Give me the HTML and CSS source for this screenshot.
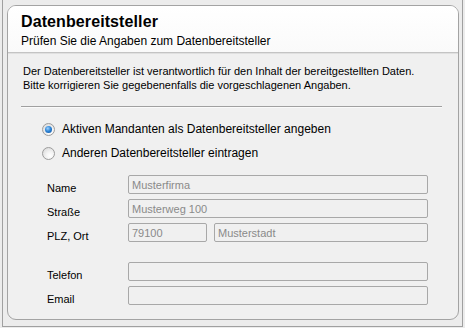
FILE: index.html
```html
<!DOCTYPE html>
<html lang="de">
<head>
<meta charset="utf-8">
<title>Datenbereitsteller</title>
<link rel="stylesheet" href="styles.css">
</head>
<body>
<div class="frame">
  <div class="panel">
    <div class="header">
      <div class="title">Datenbereitsteller</div>
      <div class="subtitle">Prüfen Sie die Angaben zum Datenbereitsteller</div>
    </div>
    <div class="content">
      <p class="intro">Der Datenbereitsteller ist verantwortlich für den Inhalt der bereitgestellten Daten.<br>Bitte korrigieren Sie gegebenenfalls die vorgeschlagenen Angaben.</p>
      <div class="sep"></div>
      <div class="radios">
        <label class="radio"><span class="dot checked"></span>Aktiven Mandanten als Datenbereitsteller angeben</label>
        <label class="radio"><span class="dot"></span>Anderen Datenbereitsteller eintragen</label>
      </div>
      <div class="form">
        <div class="lbl">Name</div>
        <div class="field">Musterfirma</div>
        <div class="lbl">Straße</div>
        <div class="field">Musterweg 100</div>
        <div class="lbl">PLZ, Ort</div>
        <div class="split">
          <div class="field plz">79100</div>
          <div class="field ort">Musterstadt</div>
        </div>
        <div class="lbl gap">Telefon</div>
        <div class="field gap"></div>
        <div class="lbl">Email</div>
        <div class="field"></div>
      </div>
    </div>
  </div>
</div>
</body>
</html>
```

FILE: styles.css
```css
html, body {
  margin: 0;
  padding: 0;
  background: #ececec;
}
body {
  width: 465px;
  height: 328px;
  padding: 0 2px 1px 2px;
  box-sizing: border-box;
  font-family: "Liberation Sans", Arial, sans-serif;
  font-size: 11px;
  color: #000;
}
.frame {
  height: 100%;
  box-sizing: border-box;
  border: 1px solid #a0a0a0;
  border-top: none;
  padding: 5px 3px 6px 4px;
  background: #ececec;
}
.panel {
  height: 315px;
  box-sizing: border-box;
  border: 1px solid #a3a3a3;
  border-radius: 9px;
  background: #f0f0f0;
  overflow: hidden;
  display: flex;
  flex-direction: column;
}
.header {
  height: 47px;
  box-sizing: border-box;
  background: linear-gradient(#ffffff, #fafafa);
  border-bottom: 1px solid #c4c4c4;
  box-shadow: 0 1px 0 #e0e0e0;
  padding: 6px 0 0 13px;
}
.title {
  font-weight: bold;
  font-size: 16px;
  line-height: 20px;
  letter-spacing: 0.1px;
}
.subtitle {
  font-size: 12px;
  line-height: 14px;
  margin-top: 2px;
}
.content {
  padding: 11px 0 0 15px;
}
.intro {
  margin: 0;
  line-height: 14px;
}
.sep {
  margin: 14px 0 0 -2px;
  width: 421px;
  border-top: 1px solid #a0a0a0;
  border-bottom: 1px solid #fafafa;
}
.radios {
  margin: 14px 0 0 19px;
  display: flex;
  flex-direction: column;
  gap: 10px;
}
.radio {
  display: flex;
  align-items: center;
  height: 14px;
  gap: 7px;
  font-size: 12px;
}
.dot {
  width: 11px;
  height: 11px;
  border-radius: 50%;
  border: 1px solid #9c9c9c;
  background: radial-gradient(circle at 65% 70%, #ffffff 0, #f4f4f4 35%, #d4d4d4 100%);
  position: relative;
}
.dot.checked::after {
  content: "";
  position: absolute;
  left: 2px;
  top: 2px;
  width: 7px;
  height: 7px;
  border-radius: 50%;
  background: radial-gradient(circle at 40% 35%, #9fd2ff 0, #2f86d6 45%, #0a4c9c 100%);
}
.form {
  margin: 15px 0 0 24px;
  display: grid;
  grid-template-columns: 81px 300px;
  row-gap: 5px;
  align-items: center;
}
.lbl {
  height: 19px;
  box-sizing: border-box;
  padding-top: 6px;
  line-height: 14px;
}
.lbl.gap, .field.gap {
  margin-top: 15px;
}
.field {
  height: 19px;
  box-sizing: border-box;
  border: 1px solid #a8a8a8;
  border-radius: 2px;
  background: #f0f0f0;
  color: #8a8a8a;
  padding: 2px 0 0 3px;
  line-height: 14px;
  white-space: nowrap;
}
.split {
  display: flex;
  gap: 7px;
}
.plz {
  width: 79px;
}
.ort {
  flex: 1;
}
```
